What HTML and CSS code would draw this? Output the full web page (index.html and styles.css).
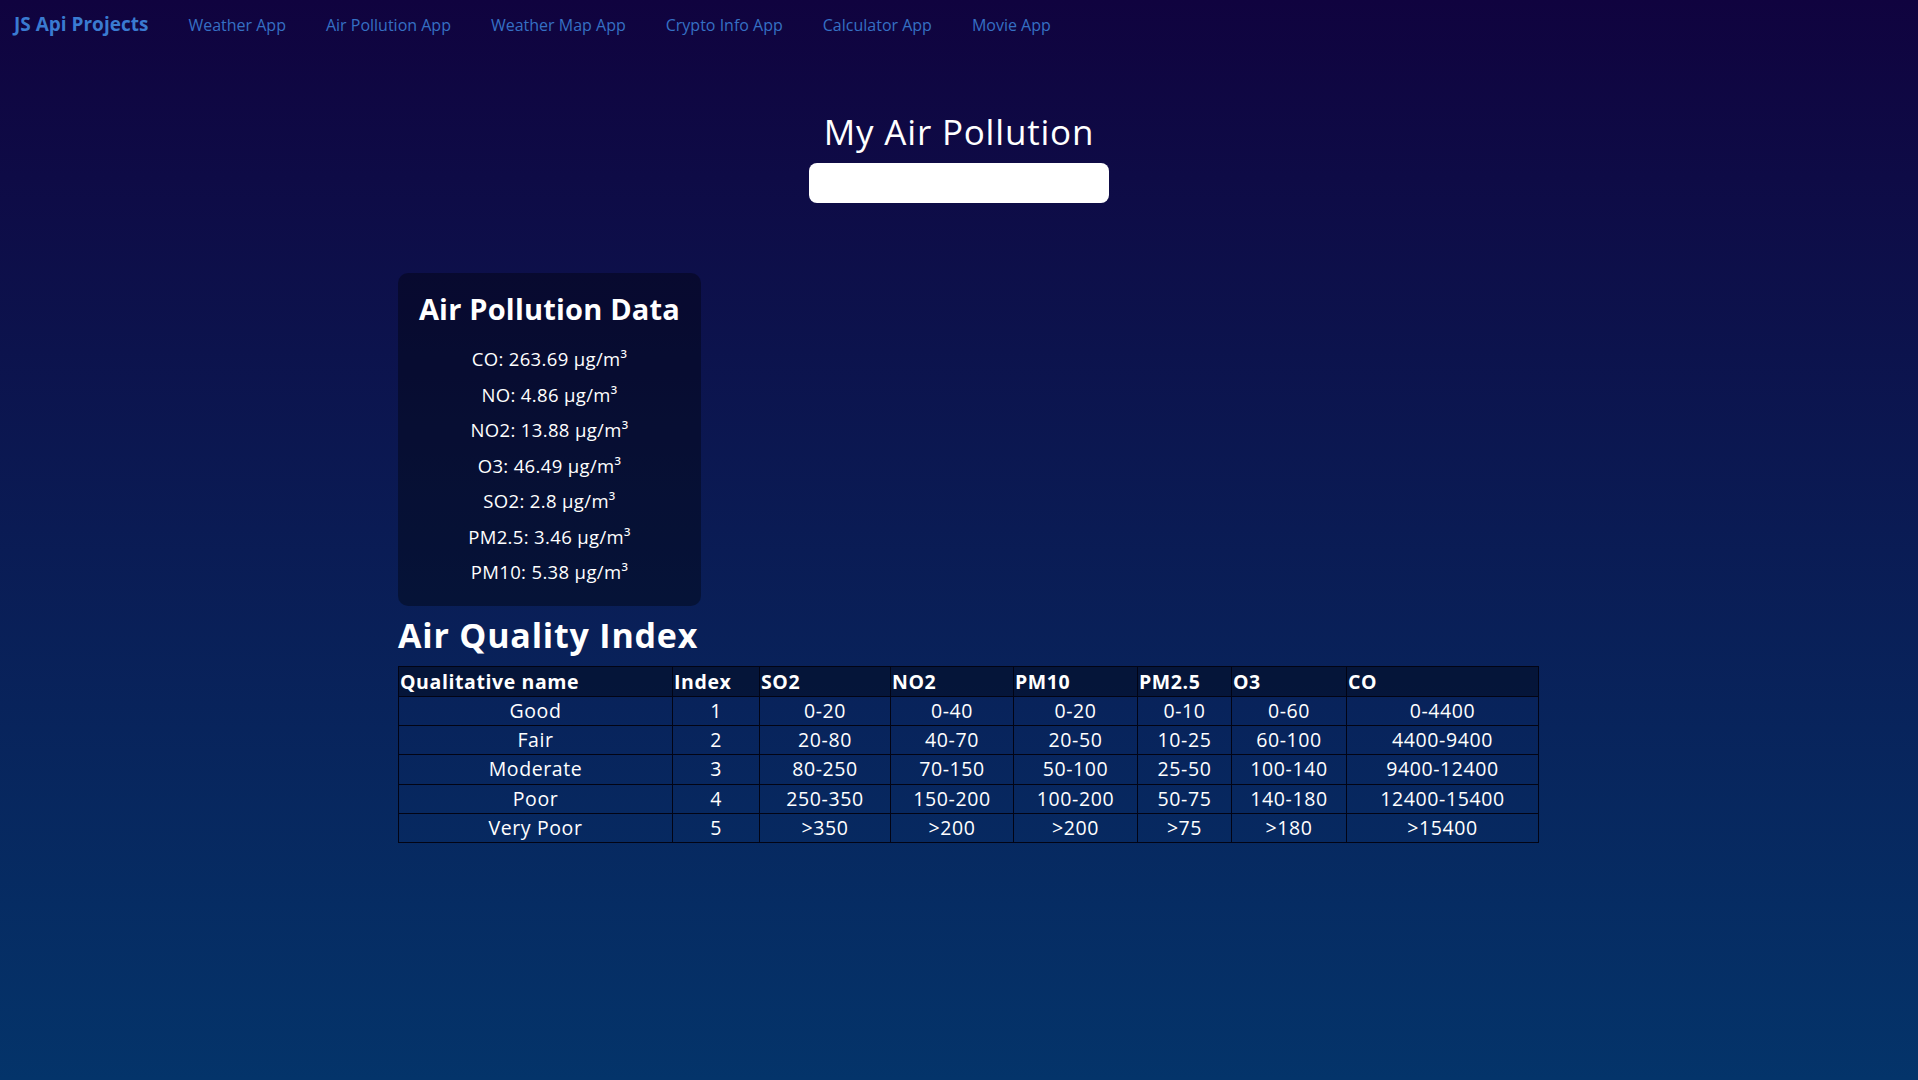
FILE: index.html
```html
<!DOCTYPE html>
<html lang="en">
<head>
<meta charset="utf-8">
<title>My Air Pollution</title>
<link rel="stylesheet" href="styles.css">
</head>
<body>
<nav class="navbar">
  <a class="brand" href="#">JS Api Projects</a>
  <ul class="nav-links">
    <li><a href="#">Weather App</a></li>
    <li><a href="#">Air Pollution App</a></li>
    <li><a href="#">Weather Map App</a></li>
    <li><a href="#">Crypto Info App</a></li>
    <li><a href="#">Calculator App</a></li>
    <li><a href="#">Movie App</a></li>
  </ul>
</nav>
<main class="page">
  <h1 class="title">My Air Pollution</h1>
  <input class="search" type="text" aria-label="City">
  <section class="content">
    <div class="data-card">
      <h2 class="card-title">Air Pollution Data</h2>
      <p class="item">CO: 263.69 µg/m³</p>
      <p class="item">NO: 4.86 µg/m³</p>
      <p class="item">NO2: 13.88 µg/m³</p>
      <p class="item">O3: 46.49 µg/m³</p>
      <p class="item">SO2: 2.8 µg/m³</p>
      <p class="item">PM2.5: 3.46 µg/m³</p>
      <p class="item">PM10: 5.38 µg/m³</p>
    </div>
    <h2 class="aqi-title">Air Quality Index</h2>
    <table class="aqi">
      <colgroup>
        <col class="c-name"><col class="c-index"><col class="c-so2"><col class="c-no2">
        <col class="c-pm10"><col class="c-pm25"><col class="c-o3"><col class="c-co">
      </colgroup>
      <thead>
        <tr><th>Qualitative name</th><th>Index</th><th>SO2</th><th>NO2</th><th>PM10</th><th>PM2.5</th><th>O3</th><th>CO</th></tr>
      </thead>
      <tbody>
        <tr><td>Good</td><td>1</td><td>0-20</td><td>0-40</td><td>0-20</td><td>0-10</td><td>0-60</td><td>0-4400</td></tr>
        <tr><td>Fair</td><td>2</td><td>20-80</td><td>40-70</td><td>20-50</td><td>10-25</td><td>60-100</td><td>4400-9400</td></tr>
        <tr><td>Moderate</td><td>3</td><td>80-250</td><td>70-150</td><td>50-100</td><td>25-50</td><td>100-140</td><td>9400-12400</td></tr>
        <tr><td>Poor</td><td>4</td><td>250-350</td><td>150-200</td><td>100-200</td><td>50-75</td><td>140-180</td><td>12400-15400</td></tr>
        <tr><td>Very Poor</td><td>5</td><td>&gt;350</td><td>&gt;200</td><td>&gt;200</td><td>&gt;75</td><td>&gt;180</td><td>&gt;15400</td></tr>
      </tbody>
    </table>
  </section>
</main>
</body>
</html>
```

FILE: styles.css
```css
* { box-sizing: border-box; }

html, body {
  margin: 0;
  padding: 0;
}

body {
  min-height: 100vh;
  font-family: "Open Sans", "Noto Sans", sans-serif;
  color: #ffffff;
  background: linear-gradient(to bottom, #10033f 0%, #04346a 100%);
}

.navbar {
  display: flex;
  align-items: baseline;
  height: 50px;
  padding: 12px 0 0 14px;
}

.brand {
  font-size: 19px;
  line-height: 24px;
  font-weight: 700;
  color: #3a7bd1;
  text-decoration: none;
}

.nav-links {
  display: flex;
  list-style: none;
  margin: 0;
  padding: 0;
}

.nav-links li {
  margin-left: 40px;
}

.nav-links a {
  font-size: 16px;
  line-height: 20px;
  color: #3570c4;
  text-decoration: none;
}

.page {
  display: flex;
  flex-direction: column;
  align-items: center;
}

.title {
  margin: 62px 0 0;
  font-size: 35px;
  line-height: 40px;
  font-weight: 400;
  letter-spacing: 0.8px;
}

.search {
  display: block;
  width: 300px;
  height: 40px;
  margin-top: 11px;
  border: none;
  border-radius: 8px;
  background: #ffffff;
}

.content {
  width: 1140px;
  margin-top: 70px;
  align-self: flex-start;
  margin-left: 398px;
}

.data-card {
  width: 303px;
  padding: 18px 10px 16px;
  border-radius: 10px;
  background: rgba(0, 0, 0, 0.36);
  text-align: center;
}

.card-title {
  margin: 0 0 14px;
  font-size: 29px;
  line-height: 36px;
  font-weight: 700;
  letter-spacing: 0.2px;
}

.item {
  margin: 0;
  font-size: 18.5px;
  line-height: 35.5px;
  letter-spacing: 0.35px;
}

.aqi-title {
  margin: 9px 0 11px;
  font-size: 34px;
  line-height: 40px;
  font-weight: 700;
  letter-spacing: 0.8px;
}

.aqi {
  width: 1140px;
  table-layout: fixed;
  border-collapse: collapse;
}

.c-name { width: 274px; }
.c-index { width: 87px; }
.c-so2 { width: 131px; }
.c-no2 { width: 123px; }
.c-pm10 { width: 124px; }
.c-pm25 { width: 94px; }
.c-o3 { width: 115px; }
.c-co { width: 192px; }

.aqi th,
.aqi td {
  border: 1px solid #020414;
  padding: 0;
}

.aqi th {
  background: rgba(0, 0, 0, 0.36);
  text-align: left;
  font-size: 19.5px;
  line-height: 29.5px;
  font-weight: 700;
  padding-left: 1px;
  letter-spacing: 0.6px;
}

.aqi td {
  text-align: center;
  font-size: 19.5px;
  line-height: 28.2px;
  letter-spacing: 0.6px;
}
```
